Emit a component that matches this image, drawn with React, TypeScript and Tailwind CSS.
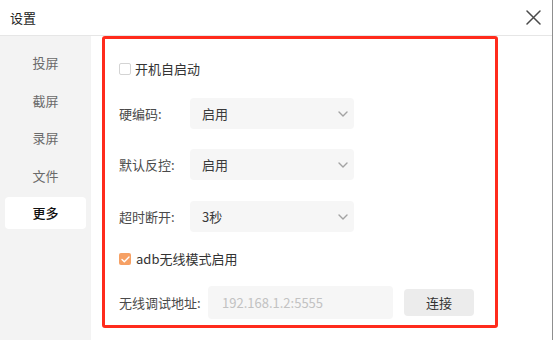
import React from "react";

const font = '"Noto Sans CJK SC", "Noto Sans", "Liberation Sans", sans-serif';

function Chevron() {
  return (
    <svg width="10" height="6" viewBox="0 0 10 6" fill="none">
      <path d="M1 1l4 4 4-4" stroke="#a3a3a3" strokeWidth="1.4" strokeLinecap="round" strokeLinejoin="round" />
    </svg>
  );
}

function SelectRow({ label, value, className }: { label: string; value: string; className?: string }) {
  return (
    <div className={"flex items-center " + (className ?? "")}>
      <span className="w-[71px] text-[13px] text-[#4a4a4a]">{label}</span>
      <div className="w-[164px] h-[31px] bg-[#f6f6f6] rounded-[4px] flex items-center justify-between pl-[12px] pr-[6px]">
        <span className="text-[13px] text-[#3a3a3a]">{value}</span>
        <Chevron />
      </div>
    </div>
  );
}

export default function App() {
  const items = ["投屏", "截屏", "录屏", "文件", "更多"];
  return (
    <div className="w-[554px] h-[340px] bg-white flex overflow-hidden" style={{ fontFamily: font }}>
      <div className="w-[553px] h-full border-r border-[#8f8f8f] flex flex-col">
        <div className="h-[36px] shrink-0 border-b border-[#e6e6e6] flex items-center justify-between pl-[10px] pr-[11px]">
          <span className="text-[13px] text-[#222]">设置</span>
          <svg width="15" height="15" viewBox="0 0 15 15" fill="none">
            <path d="M1 1l13 13M14 1L1 14" stroke="#4a4a4a" strokeWidth="1.5" strokeLinecap="round" />
          </svg>
        </div>
        <div className="flex flex-1">
          <div className="w-[91px] bg-[#f3f3f3] pt-[11px] px-[5px] flex flex-col gap-[5.5px]">
            {items.map((t, i) => (
              <div
                key={t}
                className={
                  "h-[32px] flex items-center justify-center rounded-[4px] text-[13px] " +
                  (i === 4 ? "bg-white text-[#111] font-medium" : "text-[#6a6a6a]")
                }
              >
                {t}
              </div>
            ))}
          </div>
          <div className="ml-[11px] w-[396px] h-[292px] border-[3px] border-[#ff2b1c] rounded-[3px] pl-[14px] pt-[21px]">
            <div className="h-[18px] flex items-center">
              <span className="w-[12px] h-[12px] border border-[#d4d4d4] rounded-[2px] bg-white" />
              <span className="ml-[4px] text-[13px] text-[#333]">开机自启动</span>
            </div>
            <SelectRow label="硬编码:" value="启用" className="mt-[20px]" />
            <SelectRow label="默认反控:" value="启用" className="mt-[20px]" />
            <SelectRow label="超时断开:" value="3秒" className="mt-[21px]" />
            <div className="h-[18px] flex items-center mt-[18px]">
              <span className="w-[12px] h-[12px] rounded-[2px] bg-[#f6a064] flex items-center justify-center">
                <svg width="9" height="7" viewBox="0 0 9 7" fill="none">
                  <path d="M1 3.5l2.3 2.2L8 1" stroke="white" strokeWidth="1.4" strokeLinecap="round" strokeLinejoin="round" />
                </svg>
              </span>
              <span className="ml-[5px] text-[13px] text-[#333]">adb无线模式启用</span>
            </div>
            <div className="flex items-center mt-[18px]">
              <span className="w-[89px] text-[13px] text-[#4a4a4a]">无线调试地址:</span>
              <div className="w-[185px] h-[33px] bg-[#f6f6f6] rounded-[4px] flex items-center pl-[14px]">
                <span className="text-[13px] text-[#c2c2c2]">192.168.1.2:5555</span>
              </div>
              <div className="ml-[11px] w-[70px] h-[27px] bg-[#ececec] rounded-[4px] flex items-center justify-center text-[13px] text-[#333]">
                连接
              </div>
            </div>
          </div>
        </div>
      </div>
    </div>
  );
}
